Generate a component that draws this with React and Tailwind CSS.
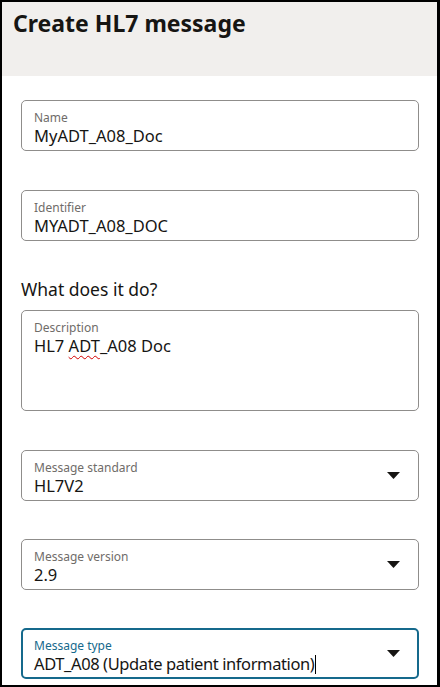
import React from "react";

const font = { fontFamily: '"Noto Sans", "Open Sans", sans-serif' };

function Caret() {
  return (
    <svg width="13" height="7" viewBox="0 0 13 7" className="shrink-0">
      <path d="M0 0 H13 L6.5 7 Z" fill="#161513" />
    </svg>
  );
}

function Field({ label, value, select, focused, tall, children }) {
  return (
    <div
      className={
        "relative flex w-[398px] items-start rounded-[5px] bg-white " +
        (focused ? "border-2 border-[#15698c] " : "border border-[#8f8d8b] ") +
        (tall ? "h-[101px]" : "h-[51px]")
      }
    >
      <div className={"flex flex-1 flex-col " + (focused ? "pl-[11px] pt-[9px]" : "pl-[12px] pt-[10px]")}>
        <span
          className={
            "mb-px text-[12px] leading-[14px] " + (focused ? "text-[#15698c]" : "text-[#6f6c69]")
          }
        >
          {label}
        </span>
        <span className="whitespace-nowrap text-[16.5px] leading-[20px] text-[#161513]">{children || value}</span>
      </div>
      {select && (
        <div className={"flex self-center " + (focused ? "pr-[17px]" : "pr-[18px]")}>
          <Caret />
        </div>
      )}
    </div>
  );
}

export default function App() {
  return (
    <div
      style={font}
      className="box-border flex h-[687px] w-[440px] flex-col overflow-hidden border-2 border-r-[3px] border-black bg-white"
    >
      <div className="h-[74px] shrink-0 bg-[#f1efed] pl-[11px] pt-[6px]">
        <h1 className="text-[23px] font-bold leading-[30px] text-[#161513]">Create HL7 message</h1>
      </div>
      <div className="flex flex-col pl-[19px] pt-[24px]">
        <Field label="Name" value="MyADT_A08_Doc" />
        <div className="h-[39px] shrink-0" />
        <Field label="Identifier" value="MYADT_A08_DOC" />
        <div className="pt-[36px] pb-[9px] text-[17.5px] leading-[24px] text-[#161513]">What does it do?</div>
        <Field label="Description" tall>
          HL7{" "}
          <span className="underline decoration-wavy decoration-[#d40000] decoration-1 underline-offset-[3px]">ADT</span>
          _A08 Doc
        </Field>
        <div className="h-[39px] shrink-0" />
        <Field label="Message standard" value="HL7V2" select />
        <div className="h-[38px] shrink-0" />
        <Field label="Message version" value="2.9" select />
        <div className="h-[38px] shrink-0" />
        <Field label="Message type" select focused>
          <span className="tracking-[-0.4px]">ADT_A08 (Update patient information)</span>
          <span className="ml-px inline-block h-[19px] w-px bg-black align-[-4px]" />
        </Field>
      </div>
    </div>
  );
}
